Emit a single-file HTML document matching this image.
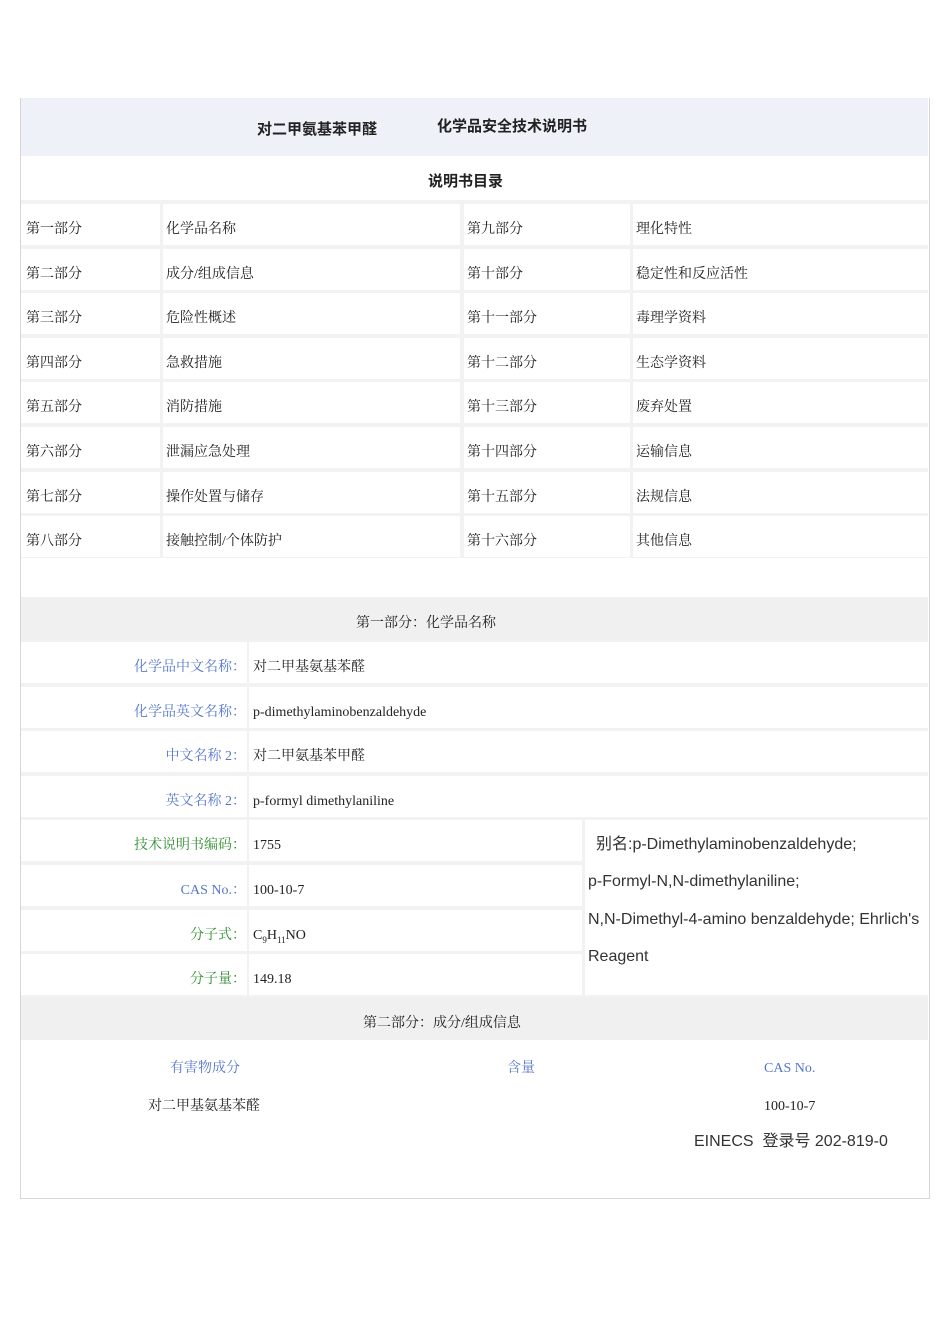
<!DOCTYPE html>
<html><head><meta charset="utf-8"><style>
*{margin:0;padding:0;box-sizing:border-box}
body{width:950px;height:1344px;background:#fff;position:relative;font-family:"Liberation Serif","Noto Serif CJK SC",serif;font-size:14px;color:#222;overflow:hidden}
.a{position:absolute;white-space:nowrap;line-height:20px}
.box{position:absolute;left:20px;top:98px;width:910px;height:1101px;border:1px solid #d6d6d6;border-top:none}
.c{position:absolute;background:#fff}
.g{background:#f0f0f0}
.b{color:#5577cc}
.gr{color:#2f8f2f}
.s{font-family:"Liberation Sans","Noto Sans CJK SC",sans-serif}
.r{text-align:right}
</style></head><body>
<div class="box"></div>
<div class="a" style="left:21px;top:98px;width:907px;height:58px;background:#eef2f8"></div>
<div class="a s" style="left:257px;top:120px;font-weight:bold;font-size:15px">对二甲氨基苯甲醛</div>
<div class="a s" style="left:437px;top:117px;font-weight:bold;font-size:15px">化学品安全技术说明书</div>
<div class="a s" style="left:428px;top:172px;font-weight:bold;font-size:15px">说明书目录</div>
<div class="a" style="left:21px;top:200px;width:907px;height:358px;background:#f2f2f2"></div>
<div id="toc"></div>
<div class="a g" style="left:21px;top:597px;width:907px;height:43px"></div>
<div class="a" style="left:356px;top:614px">第一部分：化学品名称</div>
<div class="a" style="left:21px;top:640px;width:907px;height:357px;background:#f2f2f2"></div>
<div id="s1"></div>
<div class="a g" style="left:21px;top:997px;width:907px;height:43px"></div>
<div class="a" style="left:363px;top:1014px">第二部分：成分/组成信息</div>
<div class="a b" style="left:170px;top:1059px">有害物成分</div>
<div class="a b" style="left:507px;top:1059px">含量</div>
<div class="a b" style="left:764px;top:1059px">CAS No.</div>
<div class="a" style="left:148px;top:1097px">对二甲基氨基苯醛</div>
<div class="a" style="left:764px;top:1097px">100-10-7</div>
<div class="a s" style="left:694px;top:1132px;font-size:16px;color:#333">EINECS &nbsp;登录号 202-819-0</div>
<script>
var t=[["第一部分","化学品名称","第九部分","理化特性"],["第二部分","成分/组成信息","第十部分","稳定性和反应活性"],["第三部分","危险性概述","第十一部分","毒理学资料"],["第四部分","急救措施","第十二部分","生态学资料"],["第五部分","消防措施","第十三部分","废弃处置"],["第六部分","泄漏应急处理","第十四部分","运输信息"],["第七部分","操作处置与储存","第十五部分","法规信息"],["第八部分","接触控制/个体防护","第十六部分","其他信息"]];
var cols=[[21,139,5],[163,297,3],[464,166,3],[633,295,3]],h="";
t.forEach(function(r,i){var y=204+i*44.6;r.forEach(function(x,j){h+='<div class="c" style="left:'+cols[j][0]+'px;top:'+y+'px;width:'+cols[j][1]+'px;height:41px"></div><div class="a" style="left:'+(cols[j][0]+cols[j][2])+'px;top:'+(y+16)+'px">'+x+'</div>';});});
document.getElementById("toc").innerHTML=h;
var s=[["化学品中文名称：","对二甲基氨基苯醛","b"],["化学品英文名称：","p-dimethylaminobenzaldehyde","b"],["中文名称 2：","对二甲氨基苯甲醛","b"],["英文名称 2：","p-formyl dimethylaniline","b"],["技术说明书编码：","1755","gr"],["CAS No.：","100-10-7","b"],["分子式：","C<sub style=\"font-size:9px;line-height:0\">9</sub>H<sub style=\"font-size:9px;line-height:0\">11</sub>NO","gr"],["分子量：","149.18","gr"]];
h="";
s.forEach(function(r,i){var y=642+i*44.6;var w=i<4?679:333;
h+='<div class="c" style="left:21px;top:'+y+'px;width:226px;height:41px"></div><div class="c" style="left:249px;top:'+y+'px;width:'+w+'px;height:41px"></div>';
h+='<div class="a r '+r[2]+'" style="left:21px;width:225px;top:'+(y+16)+'px">'+r[0]+'</div><div class="a" style="left:253px;top:'+(y+16)+'px">'+r[1]+'</div>';});
h+='<div class="c" style="left:585px;top:820px;width:343px;height:175px"></div>';
document.getElementById("s1").innerHTML=h;
</script>
<div class="a s" style="left:588px;top:826px;font-size:16px;line-height:37.4px;color:#333;white-space:normal;width:345px"><span style="padding-left:8px">别名:p-Dimethylaminobenzaldehyde;</span><br>p-Formyl-N,N-dimethylaniline;<br>N,N-Dimethyl-4-amino benzaldehyde; Ehrlich's<br>Reagent</div>
</body></html>
